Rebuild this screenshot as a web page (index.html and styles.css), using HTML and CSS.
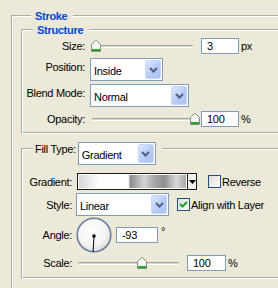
FILE: index.html
```html
<!DOCTYPE html>
<html lang="en">
<head>
    <meta charset="UTF-8">
    <title>Stroke</title>
    <link rel="stylesheet" href="styles.css">
</head>
<body>
    <fieldset class="group outer">
        <legend class="caption">Stroke</legend>

        <fieldset class="group structure">
            <legend class="caption">Structure</legend>

            <div class="row r-size">
                <span class="label">Size:</span>
                <div class="slider">
                    <span class="track"></span>
                    <span class="thumb" style="left: 1px"><svg width="10" height="12" viewBox="0 0 10 12"><path d="M0.5 4.5 L4.5 0.5 H5.5 L9.5 4.5 V11.5 H0.5 Z" fill="#f6f6f1" stroke="#7e8c8c"/><rect x="1" y="9" width="8" height="2" fill="#2aa52a"/></svg></span>
                </div>
                <span class="field">3</span>
                <span class="unit">px</span>
            </div>

            <div class="row r-select r-position">
                <span class="label">Position:</span>
                <div class="combo w-position">
                    <span class="combo-text">Inside</span>
                    <span class="combo-btn"><svg width="9" height="6" viewBox="0 0 9 6"><polyline points="1,1 4.5,4.5 8,1" fill="none" stroke="#4d6185" stroke-width="2"/></svg></span>
                </div>
            </div>

            <div class="row r-select r-blend">
                <span class="label">Blend Mode:</span>
                <div class="combo w-blend">
                    <span class="combo-text">Normal</span>
                    <span class="combo-btn"><svg width="9" height="6" viewBox="0 0 9 6"><polyline points="1,1 4.5,4.5 8,1" fill="none" stroke="#4d6185" stroke-width="2"/></svg></span>
                </div>
            </div>

            <div class="row r-opacity">
                <span class="label">Opacity:</span>
                <div class="slider">
                    <span class="track"></span>
                    <span class="thumb" style="left: 100px"><svg width="10" height="12" viewBox="0 0 10 12"><path d="M0.5 4.5 L4.5 0.5 H5.5 L9.5 4.5 V11.5 H0.5 Z" fill="#f6f6f1" stroke="#7e8c8c"/><rect x="1" y="9" width="8" height="2" fill="#2aa52a"/></svg></span>
                </div>
                <span class="field">100</span>
                <span class="unit">%</span>
            </div>
        </fieldset>

        <fieldset class="group fill">
            <legend class="fill-legend">
                <span class="fill-label">Fill Type:</span>
                <div class="combo w-fill">
                    <span class="combo-text">Gradient</span>
                    <span class="combo-btn"><svg width="9" height="6" viewBox="0 0 9 6"><polyline points="1,1 4.5,4.5 8,1" fill="none" stroke="#4d6185" stroke-width="2"/></svg></span>
                </div>
            </legend>

            <div class="row r-gradient">
                <span class="label label-fill">Gradient:</span>
                <div class="picker">
                    <span class="picker-swatch"></span>
                    <span class="picker-btn"><svg width="7" height="4" viewBox="0 0 7 4"><polygon points="0,0 7,0 3.5,4" fill="#000"/></svg></span>
                </div>
                <span class="check"></span>
                <span class="check-text">Reverse</span>
            </div>

            <div class="row r-style">
                <span class="label label-fill">Style:</span>
                <div class="combo w-style">
                    <span class="combo-text">Linear</span>
                    <span class="combo-btn"><svg width="9" height="6" viewBox="0 0 9 6"><polyline points="1,1 4.5,4.5 8,1" fill="none" stroke="#4d6185" stroke-width="2"/></svg></span>
                </div>
                <span class="check check-align"><svg width="11" height="11" viewBox="0 0 11 11"><polyline points="2,5 4.5,7.5 9,3" fill="none" stroke="#21a121" stroke-width="2"/></svg></span>
                <span class="check-text">Align with Layer</span>
            </div>

            <div class="row r-angle">
                <span class="label label-fill">Angle:</span>
                <svg class="dial" width="36" height="36" viewBox="0 0 36 36">
                    <defs>
                        <radialGradient id="dialFill" cx="0.45" cy="0.4" r="0.6">
                            <stop offset="0" stop-color="#ffffff"/>
                            <stop offset="0.7" stop-color="#f4f4f2"/>
                            <stop offset="1" stop-color="#d9d9d6"/>
                        </radialGradient>
                    </defs>
                    <circle cx="18" cy="18" r="16.8" fill="url(#dialFill)" stroke="#6b7fa3" stroke-width="1.6"/>
                    <line x1="18" y1="19" x2="17.1" y2="35" stroke="#000" stroke-width="1"/>
                    <rect x="16.5" y="17.5" width="3" height="3" fill="#000"/>
                </svg>
                <span class="field w-angle">-93</span>
                <span class="degree">°</span>
            </div>

            <div class="row r-scale">
                <span class="label label-fill">Scale:</span>
                <div class="slider">
                    <span class="track"></span>
                    <span class="thumb" style="left: 61px"><svg width="10" height="12" viewBox="0 0 10 12"><path d="M0.5 4.5 L4.5 0.5 H5.5 L9.5 4.5 V11.5 H0.5 Z" fill="#f6f6f1" stroke="#7e8c8c"/><rect x="1" y="9" width="8" height="2" fill="#2aa52a"/></svg></span>
                </div>
                <span class="field w-scale">100</span>
                <span class="unit">%</span>
            </div>
        </fieldset>
    </fieldset>
</body>
</html>
```

FILE: styles.css
```css
:root {
    --face: #ece9d8;
    --caption: #0046d5;
    --field-border: #7f9db9;
}

* {
    box-sizing: border-box;
}

body {
    margin: 0;
    width: 278px;
    height: 288px;
    overflow: hidden;
    background: var(--face);
    color: #000;
    font-family: "Liberation Sans", Arial, sans-serif;
    font-size: 11px;
    line-height: 14px;
    letter-spacing: -0.3px;
}

/* group boxes - the dialog is cut off on the right and at the bottom */
.group {
    margin: 0;
    padding: 0;
    min-width: 0;
    border: 2px groove #fff;
    border-right: none;
}

.outer {
    width: 267px;
    height: 279px;
    margin: 9px 0 0 11px;
    padding: 0 0 0 8px;
    border-bottom: none;
}

.caption {
    margin-left: 10px;
    padding: 0 6px 0 4px;
    height: 14px;
    font-weight: bold;
    color: var(--caption);
}

.structure {
    padding-bottom: 5px;
}

.fill {
    margin-top: 8px;
    padding-bottom: 6px;
}

.fill-legend {
    display: flex;
    align-items: flex-start;
    height: 14px;
    margin-left: 10px;
    padding: 0 6px 0 2px;
}

.fill-legend .combo {
    margin-left: 2px;
}

/* rows */
.row {
    display: flex;
    align-items: center;
}

.r-size { margin-top: 1px; }
.r-position { margin-top: 4px; }
.r-blend { margin-top: 3px; }
.r-opacity { margin-top: 4px; }
.r-gradient { margin-top: 17px; }
.r-style { margin-top: 3px; }
.r-angle { margin-top: 1px; }
.r-scale { margin-top: 2px; }

.r-select {
    align-items: flex-start;
}

.label {
    width: 62px;
    margin-right: 5px;
    text-align: right;
    white-space: nowrap;
}

.r-select .label {
    padding-top: 2px;
}

.label-fill {
    width: 49px;
    margin-right: 4px;
}

/* text fields */
.field {
    width: 38px;
    height: 16px;
    margin-left: 7px;
    padding-left: 5px;
    border: 1px solid var(--field-border);
    background: #fff;
    line-height: 14px;
}

.unit {
    margin-left: 2px;
}

.w-angle {
    width: 42px;
    margin-left: 4px;
}

.w-scale {
    width: 39px;
}

.degree {
    align-self: flex-start;
    margin: 7px 0 0 3px;
}

/* sliders */
.slider {
    position: relative;
    width: 104px;
    height: 12px;
}

.track {
    position: absolute;
    left: 2px;
    right: 1px;
    top: 5px;
    height: 3px;
    border-top: 1px solid #a3a197;
    border-bottom: 1px solid #fff;
    background: #dcdad0;
    border-radius: 1px;
}

.thumb {
    position: absolute;
    top: 0;
    width: 10px;
    height: 12px;
}

.thumb svg {
    display: block;
}

/* combo boxes */
.combo {
    display: flex;
    height: 23px;
    padding: 1px;
    border: 1px solid var(--field-border);
    background: #fff;
}

.w-position { width: 73px; }
.w-blend { width: 99px; }
.w-fill { width: 78px; }
.w-style { width: 93px; }

.combo-text {
    flex: 1;
    padding: 4px 0 0 2px;
    line-height: 14px;
}

.combo-btn {
    display: flex;
    align-items: center;
    justify-content: center;
    width: 16px;
    border: 1px solid #c8d6fb;
    border-radius: 2px;
    background: linear-gradient(to bottom right, #dde7fe, #b6c9f6 60%, #aec3f3);
}

.combo-btn svg {
    margin-top: 1px;
}

/* gradient picker */
.picker {
    display: flex;
    width: 120px;
    height: 17px;
    margin-left: 1px;
    border: 1px solid #1c1c1c;
    background: #fff;
}

.picker-swatch {
    flex: 1;
    border: 1px solid #fff;
    background: linear-gradient(to right, #d6d6d6 0%, #fcfcfc 18%, #ffffff 46%, #8c8c8c 48%, #d4d4d4 61%, #a4a4a4 71%, #909090 80%, #dadada 91%, #a6a6a6 100%);
}

.picker-btn {
    display: flex;
    align-items: center;
    justify-content: center;
    width: 9px;
    border-left: 1px solid #1c1c1c;
    background: #f0efe8;
}

/* check boxes */
.check {
    display: flex;
    align-items: center;
    justify-content: center;
    width: 13px;
    height: 13px;
    margin-left: 11px;
    border: 1px solid #1c5180;
    background: linear-gradient(135deg, #dcdcd7, #ffffff);
}

.check-align {
    margin-left: 8px;
}

.check-text {
    margin-left: 1px;
    white-space: nowrap;
}

.dial {
    display: block;
}
```
